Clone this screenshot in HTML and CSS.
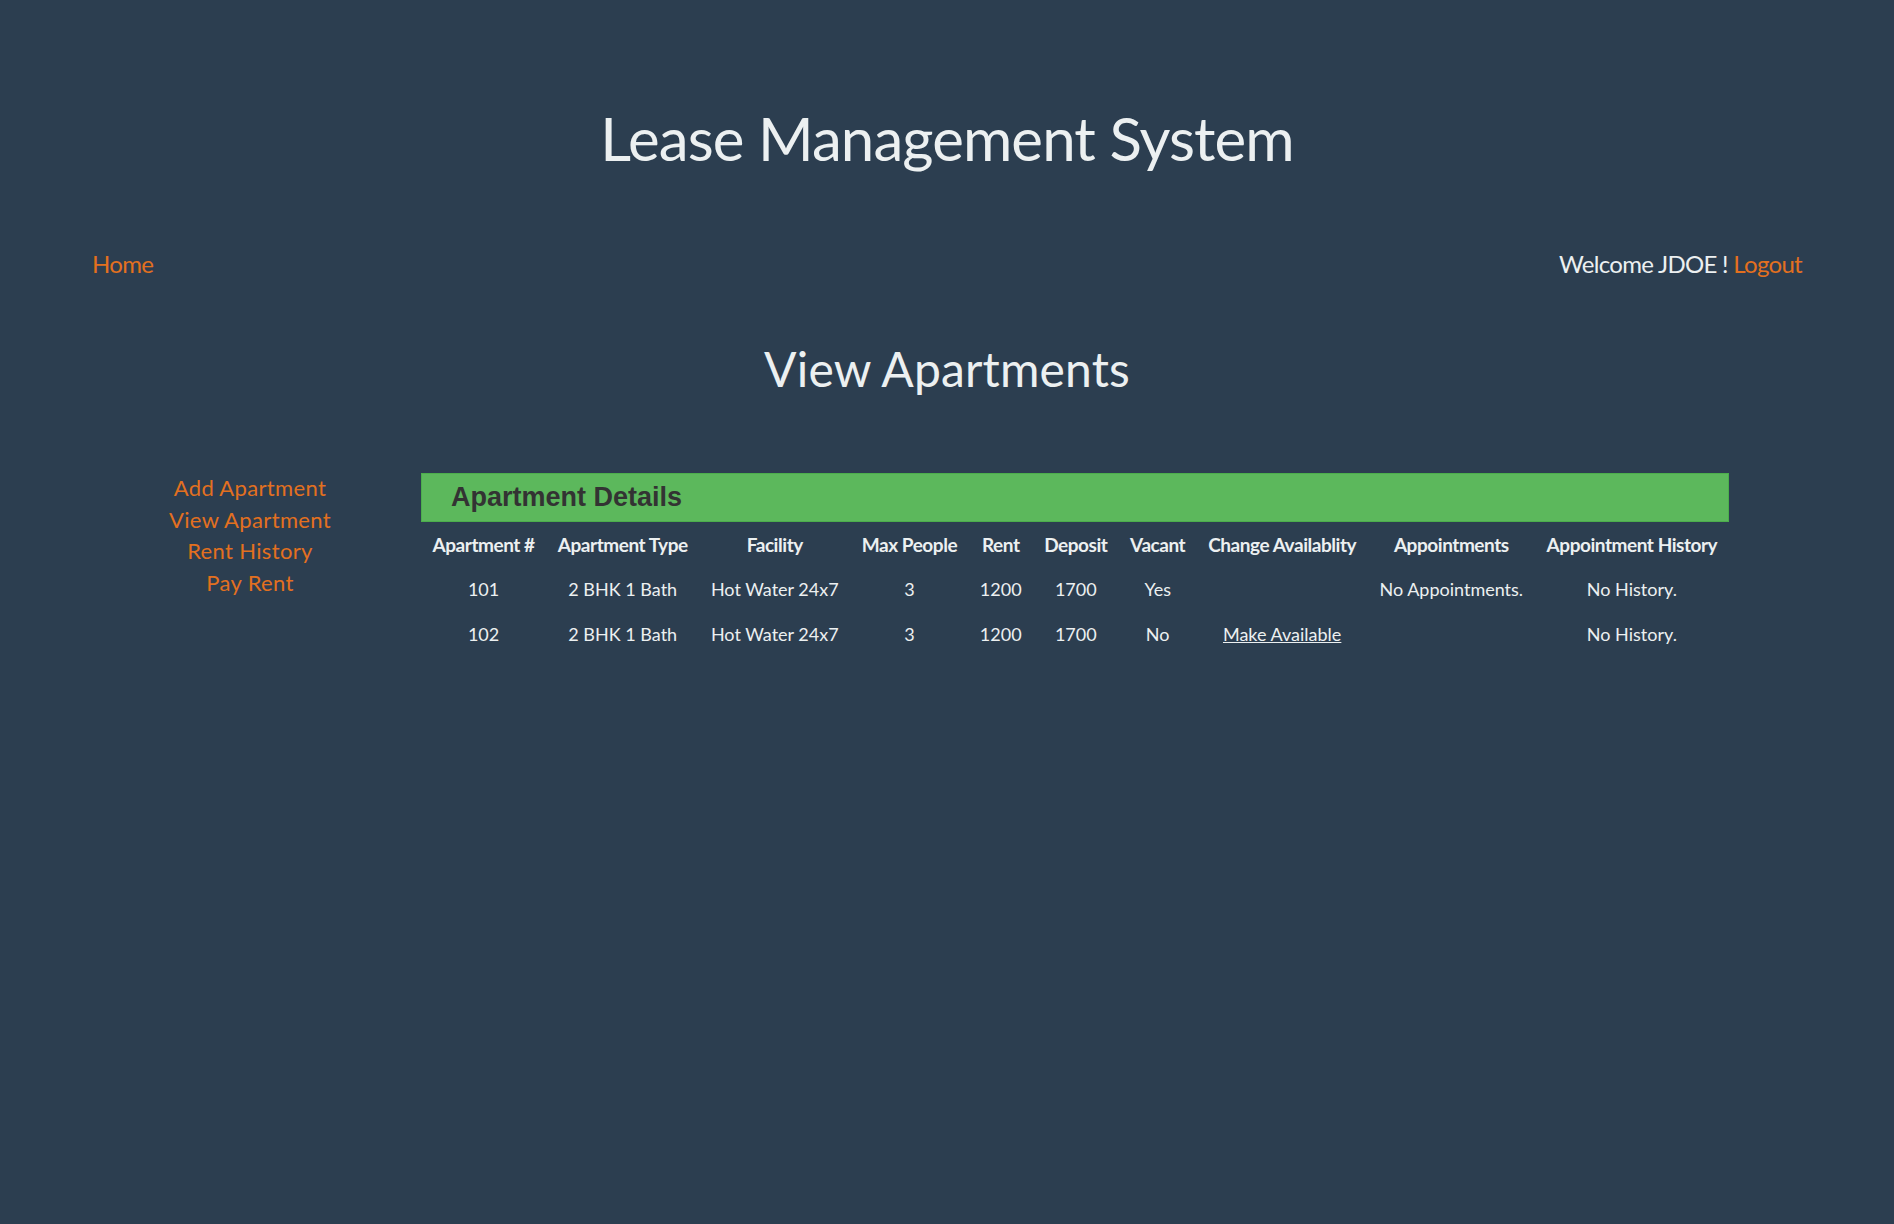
FILE: index.html
```html
<!DOCTYPE html>
<html lang="en">
<head>
<meta charset="utf-8">
<title>Lease Management System</title>
<link rel="stylesheet" href="styles.css">
</head>
<body>
<header class="site-header">
  <h1 class="site-title">Lease Management System</h1>
</header>
<nav class="top-nav">
  <a class="link" href="#">Home</a>
  <div class="user">Welcome JDOE ! <a class="link" href="#">Logout</a></div>
</nav>
<h2 class="page-title">View Apartments</h2>
<main class="main-row">
  <aside class="side-menu">
    <a class="link" href="#">Add Apartment</a>
    <a class="link" href="#">View Apartment</a>
    <a class="link" href="#">Rent History</a>
    <a class="link" href="#">Pay Rent</a>
  </aside>
  <section class="panel">
    <div class="panel-heading">Apartment Details</div>
    <table class="apt-table">
      <thead>
        <tr>
          <th>Apartment #</th>
          <th>Apartment Type</th>
          <th>Facility</th>
          <th>Max People</th>
          <th>Rent</th>
          <th>Deposit</th>
          <th>Vacant</th>
          <th>Change Availablity</th>
          <th>Appointments</th>
          <th>Appointment History</th>
        </tr>
      </thead>
      <tbody>
        <tr>
          <td>101</td>
          <td>2 BHK 1 Bath</td>
          <td>Hot Water 24x7</td>
          <td>3</td>
          <td>1200</td>
          <td>1700</td>
          <td>Yes</td>
          <td></td>
          <td>No Appointments.</td>
          <td>No History.</td>
        </tr>
        <tr>
          <td>102</td>
          <td>2 BHK 1 Bath</td>
          <td>Hot Water 24x7</td>
          <td>3</td>
          <td>1200</td>
          <td>1700</td>
          <td>No</td>
          <td><a class="plain-link" href="#">Make Available</a></td>
          <td></td>
          <td>No History.</td>
        </tr>
      </tbody>
    </table>
  </section>
</main>
</body>
</html>
```
FILE: styles.css
```css
html, body {
  margin: 0;
  padding: 0;
}
body {
  background: #2c3e50;
  color: #ecf0f1;
  font-family: Lato, "Open Sans", sans-serif;
  min-height: 1224px;
}
.link {
  color: #e3701f;
  text-decoration: none;
}
.site-header {
  padding-top: 102px;
}
.site-title {
  margin: 0;
  font-size: 60px;
  line-height: 72px;
  font-weight: 400;
  letter-spacing: -0.9px;
  text-align: center;
}
.top-nav {
  margin-top: 76px;
  padding: 0 92px;
  display: flex;
  justify-content: space-between;
  font-size: 24px;
  line-height: 28.8px;
  letter-spacing: -0.7px;
}
.page-title {
  margin: 61px 0 0;
  font-size: 48px;
  line-height: 57.6px;
  font-weight: 400;
  letter-spacing: 0.15px;
  text-align: center;
}
.main-row {
  margin-top: 76px;
  padding-left: 92px;
  display: grid;
  grid-template-columns: 316px 1308px;
  column-gap: 13px;
  align-items: start;
}
.side-menu {
  display: flex;
  flex-direction: column;
  align-items: center;
  font-size: 22px;
  line-height: 31.5px;
  letter-spacing: 0.35px;
  margin-top: -1px;
}
.panel-heading {
  height: 47px;
  display: flex;
  align-items: center;
  padding-left: 29px;
  background: #5cb85c;
  border: 1px solid #4cae4c;
  color: #333;
  font-family: "Liberation Sans", Arial, sans-serif;
  font-weight: 700;
  font-size: 27px;
}
.apt-table {
  width: 100%;
  border-collapse: collapse;
}
.apt-table th,
.apt-table td {
  padding: 9px 11px;
  line-height: 27px;
  height: 26.7px;
  text-align: center;
  white-space: nowrap;
}
.apt-table th {
  font-size: 19px;
  font-weight: 700;
  letter-spacing: -0.45px;
}
.apt-table td {
  font-size: 18px;
  font-weight: 400;
}
.plain-link {
  color: #ecf0f1;
  text-decoration: underline;
}
```
